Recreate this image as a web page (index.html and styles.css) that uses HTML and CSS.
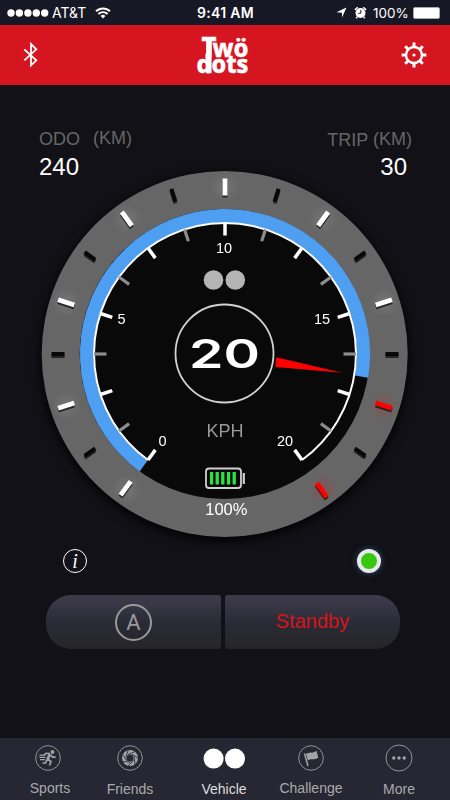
FILE: index.html
```html
<!DOCTYPE html>
<html lang="en">
<head>
    <meta charset="UTF-8">
    <title>Twodots</title>
    <link rel="stylesheet" href="styles.css">
</head>
<body>
<div class="app">
    <div class="status">
        <div class="status-left">
            <svg width="42" height="10" viewBox="0 0 42 10" fill="#fff"><circle cx="4" cy="5" r="3.7"/><circle cx="12.4" cy="5" r="3.7"/><circle cx="20.9" cy="5" r="3.7"/><circle cx="29.3" cy="5" r="3.7"/><circle cx="37.7" cy="5" r="3.7"/></svg>
            <span class="carrier">AT&amp;T</span>
            <svg class="wifi" width="16" height="12" viewBox="0 0 16 12" fill="none" stroke="#fff" stroke-width="1.9"><path d="M1 4.3a10 10 0 0 1 14 0M3.4 7a6.5 6.5 0 0 1 9.2 0"/><path d="M8 11.5L5.6 9a3.4 3.4 0 0 1 4.8 0z" fill="#fff" stroke="none"/></svg>
        </div>
        <div class="time">9:41 AM</div>
        <div class="status-right">
            <svg width="11" height="11" viewBox="0 0 11 11" fill="#fff"><path d="M10.5 .5L6 10.5V5.7L.5 5.2z"/></svg>
            <svg class="alarm" width="13" height="13" viewBox="0 0 13 13"><circle cx="6.5" cy="7" r="5" fill="#fff"/><path d="M.9 3.9L3.8 1.3M12.1 3.9L9.2 1.3M3.2 11l-1 1.3M9.8 11l1 1.3" stroke="#fff" stroke-width="1.5"/><path d="M6.8 4v3.3H4.3" fill="none" stroke="#171825"/></svg>
            <span class="percent">100%</span>
            <span class="battery"></span>
        </div>
    </div>
    <header>
        <svg class="bluetooth" width="16" height="26" viewBox="0 0 16 26" fill="none" stroke="#fff" stroke-width="1.8"><path d="M1.3 7.3L13.3 18.3L8 23.3V2L13.3 7.3L1.3 18.3"/></svg>
        <svg class="logo" width="60" height="60" viewBox="0 0 60 60" fill="#fff">
            <text class="logo-t" x="6.5" y="31.5" textLength="15" lengthAdjust="spacingAndGlyphs">T</text>
            <text x="17.5" y="31.7" textLength="36" lengthAdjust="spacingAndGlyphs">wö</text>
            <rect x="11.4" y="14" width="4.9" height="34"/>
            <text x="1.5" y="48" textLength="52" lengthAdjust="spacingAndGlyphs">dots</text>
        </svg>
        <svg class="gear" width="26" height="26" viewBox="0 0 26 26" fill="none" stroke="#fff">
            <circle cx="13" cy="13" r="8" stroke-width="2.4"/>
            <path d="M13 .6v5M13 20.4v5M.6 13h5M20.4 13h5M4.2 4.2l3.5 3.5M18.3 18.3l3.5 3.5M4.2 21.8l3.5-3.5M18.3 7.7l3.5-3.5" stroke-width="3"/>
            <circle cx="13" cy="13" r="1.6" fill="#fff" stroke="none"/>
        </svg>
    </header>
    <main>
        <div class="totals">
            <div>
                <div class="label">ODO <span class="unit odo-unit">(KM)</span></div>
                <div class="value">240</div>
            </div>
            <div class="trip">
                <div class="label">TRIP <span class="unit">(KM)</span></div>
                <div class="value">30</div>
            </div>
        </div>
        <svg class="gauge" width="450" height="390" viewBox="-225 -195 450 390">
            <defs>
                <radialGradient id="glow"><stop offset="0" stop-color="#fff" stop-opacity=".1"/><stop offset="1" stop-color="#fff" stop-opacity="0"/></radialGradient>
                <radialGradient id="glow-red"><stop offset="0" stop-color="#f00" stop-opacity=".18"/><stop offset="1" stop-color="#f00" stop-opacity="0"/></radialGradient>
                <path id="lit" d="M0-175.5v17" stroke="#fff" stroke-width="4.8"/>
                <path id="warn" d="M0-175.5v17" stroke="#f00" stroke-width="4.8"/>
                <path id="off" d="M0-173.5v13" stroke="#070707" stroke-width="4"/>
                <circle id="halo" cy="-167" r="15"/>
                <path id="tick" d="M0-131v12.5"/>
            </defs>
            <circle class="ring" cx="-.3" r="183"/>
            <circle cx="-.3" r="145" fill="#090909"/>
            <g fill="url(#glow)">
                <use href="#halo" transform="rotate(-144)"/>
                <use href="#halo" transform="rotate(-108)"/>
                <use href="#halo" transform="rotate(-72)"/>
                <use href="#halo" transform="rotate(-36)"/>
                <use href="#halo"/>
                <use href="#halo" transform="rotate(36)"/>
                <use href="#halo" transform="rotate(72)"/>
            </g>
            <g fill="url(#glow-red)">
                <use href="#halo" transform="rotate(108)"/>
                <use href="#halo" transform="rotate(144)"/>
            </g>
            <!-- outer marks, every 18 degrees -->
            <g class="marks">
                <use href="#lit" transform="rotate(-143.5)"/>
                <use href="#off" transform="rotate(-126)"/>
                <use href="#lit" transform="rotate(-108)"/>
                <use href="#off" transform="rotate(-90)"/>
                <use href="#lit" transform="rotate(-72)"/>
                <use href="#off" transform="rotate(-54)"/>
                <use href="#lit" transform="rotate(-36)"/>
                <use href="#off" transform="rotate(-18)"/>
                <use href="#lit"/>
                <use href="#off" transform="rotate(18)"/>
                <use href="#lit" transform="rotate(36)"/>
                <use href="#off" transform="rotate(54)"/>
                <use href="#lit" transform="rotate(72)"/>
                <use href="#off" transform="rotate(90)"/>
                <use href="#warn" transform="rotate(108)"/>
                <use href="#off" transform="rotate(126)"/>
                <use href="#warn" transform="rotate(144.6)"/>
            </g>
            <path d="M-81.4 112A138.4 138.4 0 1 1 136.6 22.6" fill="none" stroke="#4e9ff2" stroke-width="13.4"/>
            <path d="M-77 106A131 131 0 1 1 77 106" fill="none" stroke="#fff" stroke-width="2"/>
            <g stroke="#fff" stroke-width="3.5">
                <use href="#tick" transform="rotate(-144)"/>
                <use href="#tick" transform="rotate(-108)"/>
                <use href="#tick" transform="rotate(-72)"/>
                <use href="#tick" transform="rotate(-36)"/>
                <use href="#tick"/>
                <use href="#tick" transform="rotate(36)"/>
                <use href="#tick" transform="rotate(72)"/>
                <use href="#tick" transform="rotate(108)"/>
                <use href="#tick" transform="rotate(144)"/>
            </g>
            <g stroke="#8c8c8c" stroke-width="3.2">
                <use href="#tick" transform="rotate(-126)"/>
                <use href="#tick" transform="rotate(-90)"/>
                <use href="#tick" transform="rotate(-54)"/>
                <use href="#tick" transform="rotate(-18)"/>
                <use href="#tick" transform="rotate(18)"/>
                <use href="#tick" transform="rotate(54)"/>
                <use href="#tick" transform="rotate(90)"/>
                <use href="#tick" transform="rotate(126)"/>
            </g>
            <g class="numbers">
                <text x="-62.5" y="91.5">0</text>
                <text x="-103.5" y="-30">5</text>
                <text x="-1" y="-101">10</text>
                <text x="97" y="-30">15</text>
                <text x="60" y="91.5">20</text>
            </g>
            <circle cx="-11.5" cy="-74" r="9.8" fill="#b4b4b4"/>
            <circle cx="10.3" cy="-74" r="9.8" fill="#b4b4b4"/>
            <circle cx="-.5" cy="-.5" r="49" fill="none" stroke="#d2d2d2" stroke-width="1.8"/>
            <text class="speed" x="-36" y="14" textLength="71" lengthAdjust="spacingAndGlyphs">20</text>
            <path d="M51.3 3.2L117 18.8L50.3 13z" fill="#f00"/>
            <text class="kph" x="0" y="83">KPH</text>
            <rect x="-19" y="114.5" width="35" height="19.5" rx="3" fill="none" stroke="#d0d0d0" stroke-width="1.8"/>
            <path d="M18.8 119v11" stroke="#d0d0d0" stroke-width="2.2"/>
            <path d="M-13.4 118v12.5M-7.8 118v12.5M-2.2 118v12.5M3.6 118v12.5M9.2 118v12.5" stroke="#2fe044" stroke-width="3.3"/>
            <text class="charge" x="1.3" y="161">100%</text>
        </svg>
        <div class="indicators">
            <div class="info">i</div>
            <div class="led"></div>
        </div>
        <div class="buttons">
            <div class="btn btn-mode"><span>A</span></div>
            <div class="btn btn-state">Standby</div>
        </div>
    </main>
    <nav>
        <div class="tab sports">
            <svg width="28" height="28" viewBox="0 0 28 28">
                <circle cx="14" cy="14" r="12.3" fill="none" stroke="#92929a"/>
                <circle cx="18.5" cy="8" r="1.9" fill="#a4a4a8"/>
                <path d="M16 10l-2.5 5.5" stroke="#a4a4a8" stroke-width="3"/>
                <path d="M16 9.5L12 9.3L10 11.5M13.5 15l3.5 2.5l-1.5 4M13 15.5l-1.5 3.5H8.5M16.5 11l2.2 2.2h3" fill="none" stroke="#a4a4a8" stroke-width="1.7"/>
                <path d="M5.5 11.2H11M5.5 13.4h6M6 15.6h5" stroke="#a4a4a8" stroke-width="1.3"/>
            </svg>
            <span>Sports</span>
        </div>
        <div class="tab friends">
            <svg width="28" height="28" viewBox="0 0 28 28">
                <circle cx="14" cy="14" r="12.3" fill="none" stroke="#92929a"/>
                <circle cx="14" cy="14" r="5.8" fill="none" stroke="#a4a4a8" stroke-width="4.4"/>
                <g stroke="#272734" stroke-width=".8">
                    <path id="blade" d="M12 10.3l7.5-2.8"/>
                    <use href="#blade" transform="rotate(51.4 14 14)"/>
                    <use href="#blade" transform="rotate(102.9 14 14)"/>
                    <use href="#blade" transform="rotate(154.3 14 14)"/>
                    <use href="#blade" transform="rotate(205.7 14 14)"/>
                    <use href="#blade" transform="rotate(257.1 14 14)"/>
                    <use href="#blade" transform="rotate(308.6 14 14)"/>
                </g>
            </svg>
            <span>Friends</span>
        </div>
        <div class="tab vehicle active">
            <svg width="44" height="28" viewBox="0 0 44 28" fill="#fff"><circle cx="11.6" cy="14.6" r="10"/><circle cx="33" cy="14.6" r="10"/></svg>
            <span>Vehicle</span>
        </div>
        <div class="tab challenge">
            <svg width="28" height="28" viewBox="0 0 28 28">
                <circle cx="14" cy="14" r="12.3" fill="none" stroke="#92929a"/>
                <path d="M7.5 9.5L11 22" stroke="#a4a4a8" stroke-width="1.5"/>
                <path d="M9 9.8c4-2 6 .4 10.5-3l1.8 6.7c-4 3-6.8.7-10.5 2.7z" fill="#a4a4a8"/>
            </svg>
            <span>Challenge</span>
        </div>
        <div class="tab more">
            <svg width="28" height="28" viewBox="0 0 28 28" fill="#a4a4a8"><circle cx="14" cy="14" r="13" fill="none" stroke="#92929a"/><circle cx="8.8" cy="14" r="1.7"/><circle cx="14" cy="14" r="1.7"/><circle cx="19.2" cy="14" r="1.7"/></svg>
            <span>More</span>
        </div>
    </nav>
</div>
</body>
</html>
```
FILE: styles.css
```css
body,html{
    padding: 0;
    margin: 0;
    background-color: #111117;
    font-family: "Liberation Sans", Arial, sans-serif;
}
svg{
    display: block;
}
.app{
    width: 450px;
    height: 800px;
    overflow: hidden;
    display: flex;
    flex-direction: column;
    color: #fff;
}
.status{
    height: 25px;
    display: grid;
    grid-template-columns: 1fr auto 1fr;
    align-items: center;
    background-color: #171825;
    font-family: Inter, "Liberation Sans", sans-serif;
    font-size: 14px;
    padding: 0 10px 0 7px;
    box-sizing: border-box;
}
.status-left,.status-right{
    display: flex;
    align-items: center;
}
.status-right{
    justify-content: flex-end;
}
.carrier{
    margin-left: 3px;
    width: 36px;
}
.wifi{
    margin-left: 7px;
}
.time{
    font-weight: 600;
    font-size: 14px;
    letter-spacing: .3px;
    padding-left: 4px;
}
.alarm{
    margin-left: 7px;
}
.percent{
    margin-left: 6px;
    width: 37px;
    font-size: 13.5px;
}
.battery{
    width: 25px;
    height: 10px;
    margin-left: 3px;
    background-color: #fff;
    border: 1px solid #aaa;
    border-radius: 2px;
}
header{
    height: 60px;
    padding: 0 23px;
    display: grid;
    grid-template-columns: 1fr auto 1fr;
    align-items: center;
    background-color: #d51520;
}
.logo{
    font: 800 24.5px "Noto Sans", "Open Sans", sans-serif;
    stroke: #fff;
    stroke-width: .4;
}
.logo-t{
    font-size: 28px;
}
.gear{
    justify-self: end;
}
main{
    height: 653px;
}
.totals{
    height: 74px;
    padding: 43px 38px 0 39px;
    display: flex;
    justify-content: space-between;
}
.label{
    font-size: 18px;
    line-height: 22px;
    color: #666;
}
.unit{
    position: relative;
    top: -1px;
}
.odo-unit{
    margin-left: 8px;
}
.value{
    font-size: 24px;
    line-height: 34px;
}
.trip{
    text-align: right;
}
.trip .label{
    position: relative;
    top: 1px;
}
.trip .value{
    padding-right: 5px;
}
.gauge{
    margin-top: -43px;
}
.ring{
    fill: #666;
    filter: drop-shadow(0 3px 6px #000);
}
.marks{
    filter: drop-shadow(0 2px .5px rgba(0,0,0,.65));
}
.numbers,.charge,.kph{
    text-anchor: middle;
    fill: #fff;
    font-size: 14.5px;
}
.charge{
    font-size: 16.5px;
}
.kph{
    font-size: 18px;
    fill: #999;
}
.speed{
    font: 600 40px Inter, "Liberation Sans", sans-serif;
    fill: #fff;
}
.indicators{
    display: flex;
    justify-content: space-between;
    padding: 0 69px 0 63px;
}
.info{
    width: 22px;
    height: 22px;
    border: 1.5px solid #fff;
    border-radius: 50%;
    font: italic 20px/23px "Liberation Serif", serif;
    text-align: center;
}
.led{
    width: 16px;
    height: 16px;
    border: 4px solid #e8e8ec;
    border-radius: 50%;
    background-color: #36c70f;
    box-shadow: 0 0 6px rgba(90,150,180,.5);
}
.buttons{
    display: flex;
    gap: 4px;
    margin: 22px 50px 0 46px;
}
.btn{
    flex: 1;
    height: 54px;
    display: flex;
    align-items: center;
    justify-content: center;
    background: linear-gradient(#3e3c4c,#2a2a35 55%,#262628);
    font-size: 20px;
}
.btn-mode{
    border-radius: 25px 3px 3px 25px;
}
.btn-mode span{
    width: 33px;
    height: 33px;
    border: 2px solid #999;
    border-radius: 50%;
    color: #999;
    text-align: center;
    font: 22px/34px Roboto, sans-serif;
}
.btn-state{
    border-radius: 3px 25px 25px 3px;
    color: #d5151c;
    line-height: 52px;
    align-items: flex-start;
}
nav{
    height: 62px;
    display: grid;
    grid-template-columns: 96px 68px 120px 54px 122px;
    background-color: #272734;
}
.tab{
    display: flex;
    flex-direction: column;
    align-items: center;
    padding-top: 6px;
    font-size: 14px;
    color: #aaa;
}
.tab span{
    line-height: 20px;
    margin-top: 6px;
    white-space: nowrap;
}
.sports span{
    padding-left: 4px;
}
.vehicle span,.friends span,.more span{
    margin-top: 7px;
}
.active{
    color: #ddd;
}
```
